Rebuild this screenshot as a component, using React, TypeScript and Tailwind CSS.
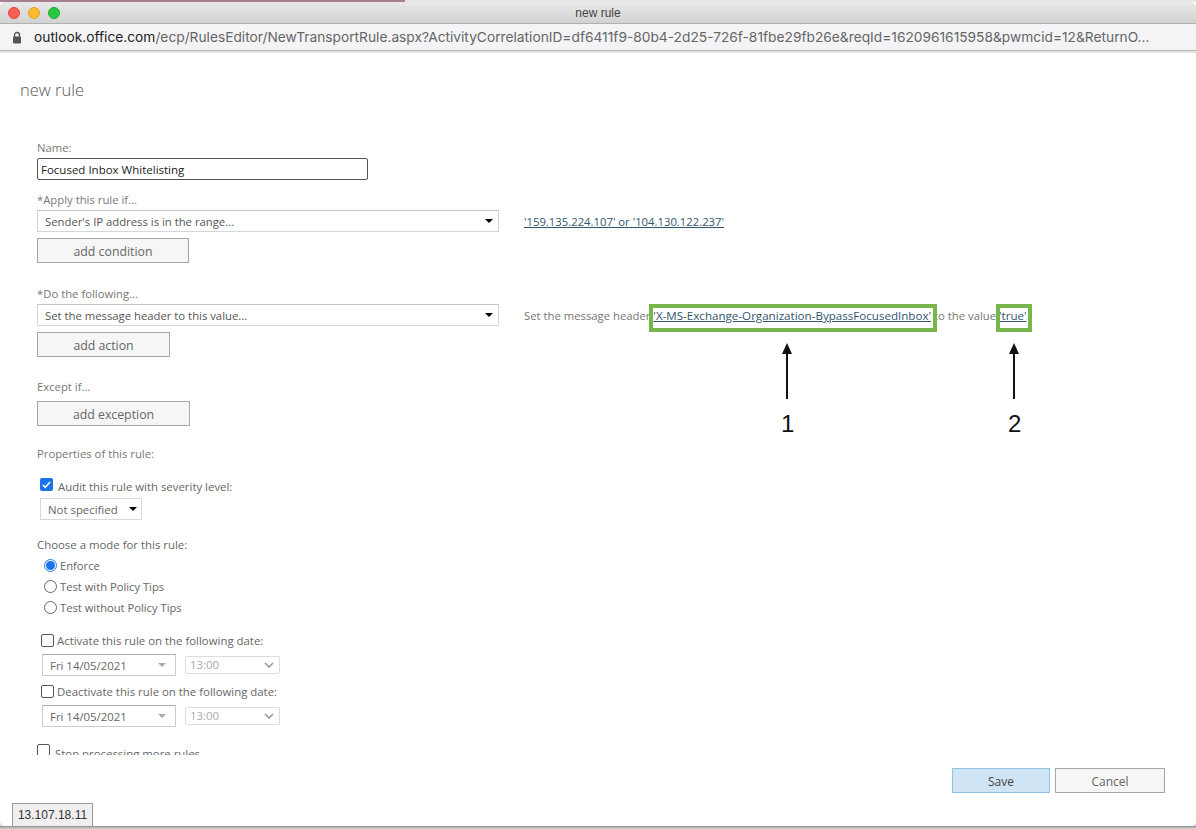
import React from "react";

const SANS = "font-['Open_Sans','Noto_Sans',sans-serif]";

function Caret() {
  return <span className="w-0 h-0 border-x-[4px] border-x-transparent border-t-[4px] border-t-black" />;
}

function WideSelect({ label }: { label: string }) {
  return (
    <div className="w-[462px] h-[22px] shrink-0 border border-[#d0d7de] border-t-[#c4c4c4] flex items-center justify-between pl-[7px] pr-[5px] text-[11.3px] text-[#555]">
      <span className="pt-[2px]">{label}</span>
      <Caret />
    </div>
  );
}

function Btn({ label, w }: { label: string; w: string }) {
  return (
    <div className={`${w} h-[25px] pt-[4px] border border-[#a0a8aa] bg-[#f6f6f6] flex items-center justify-center text-[12.3px] text-[#666]`}>
      {label}
    </div>
  );
}

function Radio({ checked, label }: { checked?: boolean; label: string }) {
  return (
    <div className="h-[21px] flex items-center ml-[7px]">
      <span className={`w-[13px] h-[13px] rounded-full border flex items-center justify-center -mt-[3px] ${checked ? "border-[#2f7de1]" : "border-[#666]"}`}>
        {checked && <span className="w-[9px] h-[9px] rounded-full bg-[#1a73e8]" />}
      </span>
      <span className="ml-[3px] text-[11.2px] text-[#666]">{label}</span>
    </div>
  );
}

function Check({ label, className = "" }: { label: string; className?: string }) {
  return (
    <div className={`flex items-center text-[11.4px] text-[#666] ${className}`}>
      <span className="w-[13px] h-[13px] rounded-[2px] border border-[#555] bg-white mr-[3px] -mt-[2px]" />
      <span>{label}</span>
    </div>
  );
}

function DateRow() {
  return (
    <div className="flex items-center gap-[9px] ml-[5px] mt-[4px]">
      <div className="w-[134px] h-[22px] border border-[#ccc] border-t-[#aaa] flex items-center justify-between pl-[7px] pr-[9px] text-[11.4px] text-[#666]">
        <span className="pt-[2px]">Fri 14/05/2021</span>
        <span className="w-0 h-0 border-x-[4px] border-x-transparent border-t-[4px] border-t-[#aaa]" />
      </div>
      <div className="w-[95px] h-[18px] rounded-[2px] border border-[#ddd] flex items-center justify-between pl-[4px] pr-[5px] text-[11.4px] text-[#aaa]">
        <span>13:00</span>
        <svg width="10" height="6" viewBox="0 0 10 6" fill="none"><path d="M1 1l4 4 4-4" stroke="#999" strokeWidth="1.6" /></svg>
      </div>
    </div>
  );
}

function Arrow() {
  return (
    <svg width="12" height="56" viewBox="0 0 12 56">
      <path d="M6 10V56" stroke="#111" strokeWidth="2" />
      <path d="M1 11L6 0l5 11z" fill="#111" />
    </svg>
  );
}

export default function App() {
  return (
    <div className={`relative w-[1196px] h-[829px] overflow-hidden bg-[#d8d8d8] ${SANS}`}>
      <div className="absolute inset-x-0 bottom-0 h-[3px] bg-gradient-to-b from-[#8f8f8f] to-[#d8d8d8]" />
      <div className="relative h-[826px] bg-white rounded-b-[5px] flex flex-col">
        <div className="flex h-[2px] shrink-0">
          <div className="w-[405px] bg-[#a87f8f]" />
          <div className="flex-1 bg-[#e6e6e6]" />
        </div>
        <div className="relative h-[22px] shrink-0 rounded-t-[5px] bg-gradient-to-b from-[#e9e9e9] to-[#d2d2d2] border-b border-[#b0b0b0] flex items-center justify-center">
          <div className="absolute left-[8px] top-[5px] flex gap-[8px]">
            <span className="w-[12px] h-[12px] rounded-full bg-[#f95f57] border border-[#e2463f]" />
            <span className="w-[12px] h-[12px] rounded-full bg-[#fbbb30] border border-[#dfa023]" />
            <span className="w-[12px] h-[12px] rounded-full bg-[#2ac83f] border border-[#1dac2c]" />
          </div>
          <span className="pt-px text-[12px] text-[#444] font-['Liberation_Sans',sans-serif]">new rule</span>
        </div>
        <div className="h-[27px] shrink-0 bg-[#f4f4f6] border-b border-[#b5b5b5] flex items-center pl-[12px] font-['Inter',sans-serif] text-[13.75px] whitespace-nowrap overflow-hidden">
          <svg width="10" height="13" viewBox="0 0 10 13" className="mr-[12px] shrink-0">
            <path d="M2.5 6V4a2.5 2.5 0 015 0v2" fill="none" stroke="#555" strokeWidth="1.4" />
            <rect x="1" y="5.5" width="8" height="7" rx="1" fill="#555" />
          </svg>
          <span className="text-[#222]">outlook.office.com</span>
          <span className="text-[#666]">/ecp/RulesEditor/NewTransportRule.aspx?ActivityCorrelationID=df6411f9-80b4-2d25-726f-81fbe29fb26e&amp;reqId=1620961615958&amp;pwmcid=12&amp;ReturnO...</span>
        </div>
        <div className="h-[2px] shrink-0 bg-[#e4e4e4]" />

        <div className="flex-1 min-h-0 flex flex-col">
          <div className="pl-[20px] pt-[25px] h-[74px] shrink-0 text-[16.5px] font-light text-[#555]">new rule</div>
          <div className="h-[628px] shrink-0 overflow-hidden pl-[37px] text-[11.3px] text-[#777]">
            <div className="mt-[12px] h-[17px] leading-[17px]">Name:</div>
            <div className="mt-[2px] w-[331px] h-[22px] pt-[2px] rounded-[2px] border border-[#555] flex items-center pl-[3px] text-[11.5px] text-[#222]">Focused Inbox Whitelisting</div>
            <div className="mt-[11px] h-[18px] leading-[18px]">*Apply this rule if...</div>
            <div className="mt-px flex items-center">
              <WideSelect label="Sender's IP address is in the range..." />
              <a className="ml-[25px] pt-[3px] text-[11.3px] text-[#33566f] underline font-medium">'159.135.224.107' or '104.130.122.237'</a>
            </div>
            <div className="mt-[6px]"><Btn label="add condition" w="w-[152px]" /></div>
            <div className="mt-[22px] h-[18px] leading-[18px]">*Do the following...</div>
            <div className="mt-px flex items-center">
              <WideSelect label="Set the message header to this value..." />
              <div className="ml-[25px] pt-[2px] text-[11.3px] text-[#777] whitespace-nowrap">
                <span>Set the message header </span>
                <a className="text-[11.6px] text-[#33566f] underline font-medium">'X-MS-Exchange-Organization-BypassFocusedInbox'</a>
                <span> to the value </span>
                <a className="text-[11.6px] text-[#33566f] underline font-medium">'true'</a>
              </div>
            </div>
            <div className="mt-[6px]"><Btn label="add action" w="w-[133px]" /></div>
            <div className="mt-[21px] h-[18px] leading-[18px]">Except if...</div>
            <div className="mt-[5px]"><Btn label="add exception" w="w-[153px]" /></div>
            <div className="mt-[19px] h-[18px] leading-[18px]">Properties of this rule:</div>
            <div className="mt-[15px] ml-[3px] flex items-center h-[18px] text-[11.4px] text-[#666]">
              <span className="w-[13px] h-[13px] rounded-[2px] bg-[#1a73e8] flex items-center justify-center mr-[5px] -mt-[5px]">
                <svg width="9" height="8" viewBox="0 0 9 8" fill="none"><path d="M1 4l2.3 2.3L8 1" stroke="#fff" strokeWidth="1.7" /></svg>
              </span>
              Audit this rule with severity level:
            </div>
            <div className="mt-[2px] ml-[3px] w-[102px] h-[22px] border border-[#d3dae2] flex items-center justify-between pl-[7px] pr-[4px] text-[11.4px] text-[#666]">
              <span className="pt-[2px]">Not specified</span>
              <Caret />
            </div>
            <div className="mt-[16px] h-[18px] leading-[18px] text-[11.4px] text-[#666]">Choose a mode for this rule:</div>
            <div className="mt-[2px]">
              <Radio checked label="Enforce" />
              <Radio label="Test with Policy Tips" />
              <Radio label="Test without Policy Tips" />
            </div>
            <Check label="Activate this rule on the following date:" className="mt-[13px] ml-[4px] h-[18px]" />
            <DateRow />
            <Check label="Deactivate this rule on the following date:" className="mt-[7px] ml-[4px] h-[18px]" />
            <DateRow />
            <div className="mt-[17px] h-[18px] flex items-center text-[11.4px] text-[#666]">
              <span className="w-[13px] h-[13px] rounded-[2px] border border-[#555] bg-white mr-[5px] -mt-[5px]" />
              <span className="pt-[2px]">Stop processing more rules</span>
            </div>
          </div>
          <div className="flex justify-end gap-[5px] pr-[31px] pt-[13px]">
            <div className="w-[98px] h-[25px] pt-[2px] border border-[#8fc3e6] bg-[#cfe5f5] flex items-center justify-center text-[12px] text-[#444]">Save</div>
            <div className="w-[110px] h-[25px] pt-[2px] border border-[#a0a8aa] bg-[#f6f6f6] flex items-center justify-center text-[12px] text-[#666]">Cancel</div>
          </div>
        </div>
      </div>

      <div className="absolute left-[12px] top-[803px] w-[81px] h-[24px] bg-[#f1eeee] border border-[#999] flex items-center justify-center text-[12px] text-[#333] font-['Liberation_Sans',sans-serif]">13.107.18.11</div>

      <div className="absolute left-[649px] top-[304px] w-[288px] h-[28px] border-[4px] border-[#78b54a]" />
      <div className="absolute left-[996px] top-[304px] w-[36px] h-[28px] border-[4px] border-[#78b54a]" />
      <div className="absolute left-[781px] top-[343px]"><Arrow /></div>
      <div className="absolute left-[1008px] top-[343px]"><Arrow /></div>
      <div className="absolute left-[781px] top-[410px] text-[24px] leading-[28px] text-[#111] font-['Liberation_Sans',sans-serif]">1</div>
      <div className="absolute left-[1008px] top-[410px] text-[24px] leading-[28px] text-[#111] font-['Liberation_Sans',sans-serif]">2</div>
    </div>
  );
}
